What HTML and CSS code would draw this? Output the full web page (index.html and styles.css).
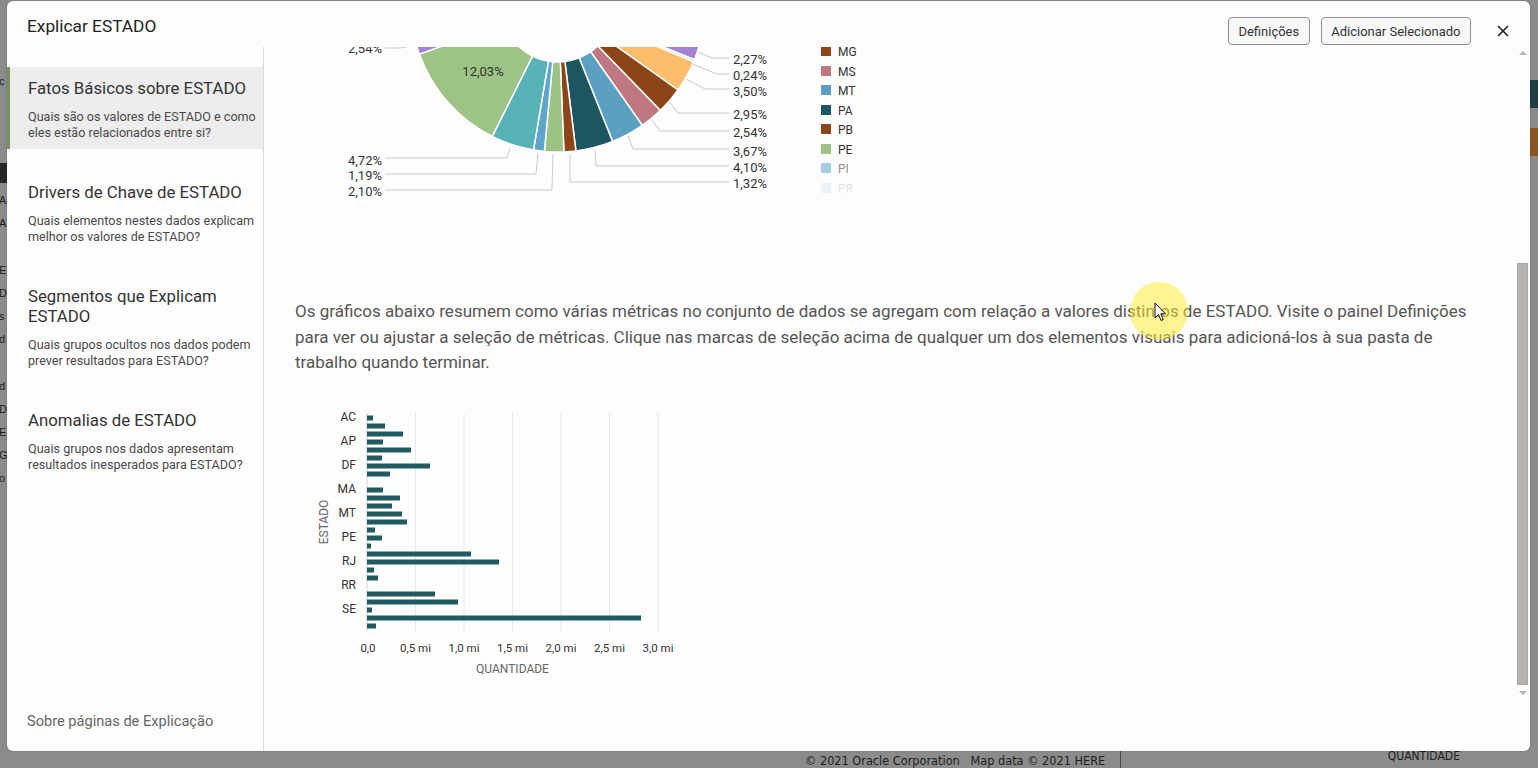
FILE: index.html
```html
<!DOCTYPE html>
<html lang="pt-BR">
<head>
<meta charset="utf-8">
<title>Explicar ESTADO</title>
<link rel="stylesheet" href="styles.css">
</head>
<body>
<div class="backdrop">
  <div class="bd-main">
    <div class="bd-left">
      <span class="bl-c">c</span>
      <span class="bl-block"></span>
      <span>A</span><span>A</span><span class="gap">E</span><span>D</span><span>s</span><span>d</span><span class="gap">d</span><span>D</span><span>E</span><span>G</span><span>o</span>
    </div>
    <div class="bd-right">
      <span class="blk teal"></span>
      <span class="blk orange"></span>
    </div>
  </div>
  <div class="bd-bottom">
    <span class="copy">© 2021 Oracle Corporation&nbsp;&nbsp; Map data © 2021 HERE</span>
    <span class="vline"></span>
    <span class="qty">QUANTIDADE</span>
  </div>
</div>

<div class="dialog">
  <header class="dlg-head">
    <h1 class="dlg-title">Explicar ESTADO</h1>
    <div class="actions">
      <button class="btn">Definições</button>
      <button class="btn">Adicionar Selecionado</button>
      <button class="close" aria-label="Fechar">
        <svg width="12" height="12" viewBox="0 0 12 12"><path d="M1 1 L11 11 M11 1 L1 11" stroke="#222" stroke-width="1.6" fill="none"/></svg>
      </button>
    </div>
  </header>
  <div class="dlg-body">
    <nav class="side">
      <ul class="nav-list">
        <li class="nav-item active">
          <h2 class="nav-title">Fatos Básicos sobre ESTADO</h2>
          <p class="nav-desc">Quais são os valores de ESTADO e como eles estão relacionados entre si?</p>
        </li>
        <li class="nav-item">
          <h2 class="nav-title">Drivers de Chave de ESTADO</h2>
          <p class="nav-desc">Quais elementos nestes dados explicam melhor os valores de ESTADO?</p>
        </li>
        <li class="nav-item">
          <h2 class="nav-title">Segmentos que Explicam ESTADO</h2>
          <p class="nav-desc">Quais grupos ocultos nos dados podem prever resultados para ESTADO?</p>
        </li>
        <li class="nav-item">
          <h2 class="nav-title">Anomalias de ESTADO</h2>
          <p class="nav-desc">Quais grupos nos dados apresentam resultados inesperados para ESTADO?</p>
        </li>
      </ul>
      <a class="about" href="#">Sobre páginas de Explicação</a>
    </nav>
    <main class="content">
      <div class="scroll-area">
        <svg class="pie" viewBox="264 47 640 160" width="640" height="160">
          <g stroke="#fff" stroke-width="1.5">
            <path fill="#a084cf" d="M700.9,39.6 A147,147 0 0 1 694.5,59.6 L610.9,26.2 A57,57 0 0 0 613.4,18.4 Z"/>
            <path fill="#d9c7ea" d="M694.5,59.6 A147,147 0 0 1 693.6,61.7 L610.6,27.0 A57,57 0 0 0 610.9,26.2 Z"/>
            <path fill="#fdbe6b" d="M693.6,61.7 A147,147 0 0 1 678.0,90.0 L604.5,37.9 A57,57 0 0 0 610.6,27.0 Z"/>
            <path fill="#8c4517" d="M678.0,90.0 A147,147 0 0 1 660.3,110.6 L597.7,45.9 A57,57 0 0 0 604.5,37.9 Z"/>
            <path fill="#bf7882" d="M660.3,110.6 A147,147 0 0 1 642.3,125.4 L590.7,51.7 A57,57 0 0 0 597.7,45.9 Z"/>
            <path fill="#5ba0c1" d="M642.3,125.4 A147,147 0 0 1 612.6,141.5 L579.2,57.9 A57,57 0 0 0 590.7,51.7 Z"/>
            <path fill="#1d5560" d="M612.6,141.5 A147,147 0 0 1 575.9,150.9 L564.9,61.6 A57,57 0 0 0 579.2,57.9 Z"/>
            <path fill="#8c4517" d="M575.9,150.9 A147,147 0 0 1 563.9,151.9 L560.3,62.0 A57,57 0 0 0 564.9,61.6 Z"/>
            <path fill="#9cc386" d="M563.9,151.9 A147,147 0 0 1 544.4,151.4 L552.7,61.8 A57,57 0 0 0 560.3,62.0 Z"/>
            <path fill="#5ea5cb" d="M544.4,151.4 A147,147 0 0 1 533.5,149.9 L548.5,61.2 A57,57 0 0 0 552.7,61.8 Z"/>
            <path fill="#58b3b6" d="M533.5,149.9 A147,147 0 0 1 492.2,136.4 L532.5,56.0 A57,57 0 0 0 548.5,61.2 Z"/>
            <path fill="#9dc485" d="M492.2,136.4 A147,147 0 0 1 419.4,54.1 L504.3,24.0 A57,57 0 0 0 532.5,56.0 Z"/>
            <path fill="#a084cf" d="M419.4,54.1 A147,147 0 0 1 413.7,33.0 L502.0,15.9 A57,57 0 0 0 504.3,24.0 Z"/>
          </g>
          <g fill="none" stroke="#c9c9c9" stroke-width="1">
            <polyline points="698,52 712,58 729,58"/>
            <polyline points="690,63 717,74 729,74"/>
            <polyline points="686,79 705,89 729,89"/>
            <polyline points="669,101 678,113 729,113"/>
            <polyline points="652,120 660,131 729,131"/>
            <polyline points="628,136 633,149 729,149"/>
            <polyline points="595,150 596,166 729,166"/>
            <polyline points="570,154 570,182 729,182"/>
            <polyline points="510,148 507,158 385,158"/>
            <polyline points="538,153 536,174 385,174"/>
            <polyline points="553,154 552,190 385,190"/>
            <polyline points="412,46 400,48 385,48"/>
          </g>
          <g class="pie-lbl">
            <text x="733" y="63.5">2,27%</text>
            <text x="733" y="79.5">0,24%</text>
            <text x="733" y="95.5">3,50%</text>
            <text x="733" y="118.5">2,95%</text>
            <text x="733" y="136.5">2,54%</text>
            <text x="733" y="155.5">3,67%</text>
            <text x="733" y="171.5">4,10%</text>
            <text x="733" y="187.5">1,32%</text>
            <text x="382" y="53" text-anchor="end">2,54%</text>
            <text x="382" y="164.5" text-anchor="end">4,72%</text>
            <text x="382" y="179.5" text-anchor="end">1,19%</text>
            <text x="382" y="195.5" text-anchor="end">2,10%</text>
            <text x="483" y="75.5" text-anchor="middle">12,03%</text>
          </g>
          <g class="legend">
            <rect x="821" y="46" width="10" height="10" fill="#8c4517"/><text x="838" y="55.5">MG</text>
            <rect x="821" y="66" width="10" height="10" fill="#bf7882"/><text x="838" y="75.5">MS</text>
            <rect x="821" y="85" width="10" height="10" fill="#5ba0c1"/><text x="838" y="94.5">MT</text>
            <rect x="821" y="105" width="10" height="10" fill="#1d5560"/><text x="838" y="114.5">PA</text>
            <rect x="821" y="124" width="10" height="10" fill="#8c4517"/><text x="838" y="133.5">PB</text>
            <rect x="821" y="144" width="10" height="10" fill="#9cc386"/><text x="838" y="153.5">PE</text>
            <g opacity="0.55"><rect x="821" y="163" width="10" height="10" fill="#5ea5cb"/><text x="838" y="172.5">PI</text></g>
            <g opacity="0.12"><rect x="821" y="183" width="10" height="10" fill="#5ea5cb"/><text x="838" y="192.5">PR</text></g>
          </g>
        </svg>

        <p class="intro">Os gráficos abaixo resumem como várias métricas no conjunto de dados se agregam com relação a valores distintos de ESTADO. Visite o painel Definições para ver ou ajustar a seleção de métricas. Clique nas marcas de seleção acima de qualquer um dos elementos visuais para adicioná-los à sua pasta de trabalho quando terminar.</p>

        <svg class="bars" viewBox="295 400 420 290" width="420" height="290">
          <g stroke="#e6e6e6" stroke-width="1">
            <line x1="415.5" y1="413" x2="415.5" y2="631"/>
            <line x1="464" y1="413" x2="464" y2="631"/>
            <line x1="512.5" y1="413" x2="512.5" y2="631"/>
            <line x1="561" y1="413" x2="561" y2="631"/>
            <line x1="609.5" y1="413" x2="609.5" y2="631"/>
            <line x1="658" y1="413" x2="658" y2="631"/>
          </g>
          <line x1="367" y1="413" x2="367" y2="631" stroke="#d4d4d4"/>
          <g fill="#225a61">
            <rect x="367" y="415.5" width="6" height="5"/>
            <rect x="367" y="423.5" width="18" height="5"/>
            <rect x="367" y="431.5" width="36" height="5"/>
            <rect x="367" y="439.5" width="16" height="5"/>
            <rect x="367" y="447.5" width="44" height="5"/>
            <rect x="367" y="455.5" width="15" height="5"/>
            <rect x="367" y="463.5" width="63" height="5"/>
            <rect x="367" y="471.5" width="23" height="5"/>
            <rect x="367" y="487.5" width="16" height="5"/>
            <rect x="367" y="495.5" width="33" height="5"/>
            <rect x="367" y="503.5" width="25" height="5"/>
            <rect x="367" y="511.5" width="35" height="5"/>
            <rect x="367" y="519.5" width="40" height="5"/>
            <rect x="367" y="527.5" width="8" height="5"/>
            <rect x="367" y="535.5" width="15" height="5"/>
            <rect x="367" y="543.5" width="4" height="5"/>
            <rect x="367" y="551.5" width="104" height="5"/>
            <rect x="367" y="559.5" width="132" height="5"/>
            <rect x="367" y="567.5" width="7" height="5"/>
            <rect x="367" y="575.5" width="11" height="5"/>
            <rect x="367" y="591.5" width="68" height="5"/>
            <rect x="367" y="599.5" width="91" height="5"/>
            <rect x="367" y="607.5" width="5" height="5"/>
            <rect x="367" y="615.5" width="274" height="5"/>
            <rect x="367" y="623.5" width="9" height="5"/>
          </g>
          <g class="ylbl" text-anchor="end">
            <text x="356" y="421">AC</text>
            <text x="356" y="445">AP</text>
            <text x="356" y="469">DF</text>
            <text x="356" y="493">MA</text>
            <text x="356" y="517">MT</text>
            <text x="356" y="541">PE</text>
            <text x="356" y="565">RJ</text>
            <text x="356" y="589">RR</text>
            <text x="356" y="613">SE</text>
          </g>
          <g class="xlbl" text-anchor="middle">
            <text x="368" y="652">0,0</text>
            <text x="415.5" y="652">0,5 mi</text>
            <text x="464" y="652">1,0 mi</text>
            <text x="512.5" y="652">1,5 mi</text>
            <text x="561" y="652">2,0 mi</text>
            <text x="609.5" y="652">2,5 mi</text>
            <text x="658" y="652">3,0 mi</text>
          </g>
          <text class="axis-title" x="512.5" y="673" text-anchor="middle">QUANTIDADE</text>
          <text class="axis-title" x="0" y="0" text-anchor="middle" transform="translate(328 522) rotate(-90)">ESTADO</text>
        </svg>
      </div>
      <div class="scrollbar">
        <span class="sb-arrow up"></span>
        <div class="sb-track"><div class="sb-thumb"></div></div>
        <span class="sb-arrow down"></span>
      </div>
    </main>
  </div>
</div>

<div class="hl"></div>
<svg class="cursor" width="14" height="21" viewBox="0 0 14 21"><path d="M1 1 L1 16 L4.5 12.6 L7 18.5 L9.3 17.5 L6.8 11.8 L11.5 11.8 Z" fill="#fff" stroke="#111" stroke-width="1" stroke-linejoin="round"/></svg>
</body>
</html>
```

FILE: styles.css
```css
* { box-sizing: border-box; }

html, body {
  margin: 0;
  padding: 0;
}

body {
  width: 1538px;
  height: 768px;
  overflow: hidden;
  position: relative;
  background: #8b8b8b;
  font-family: Roboto, "Liberation Sans", sans-serif;
}

/* ---------- backdrop (page behind the modal) ---------- */
.backdrop {
  height: 100%;
  display: flex;
  flex-direction: column;
}

.bd-main {
  flex: 1;
  display: flex;
  justify-content: space-between;
}

.bd-left {
  width: 7px;
  overflow: hidden;
  display: flex;
  flex-direction: column;
  padding-top: 70px;
  font: 11px/23px "Liberation Sans", sans-serif;
  color: #1b1b1b;
  text-indent: -1px;
}

.bd-left .bl-block {
  height: 20px;
  margin: 70px 0 6px;
  background: #262626;
}

.bd-left .gap { margin-top: 24px; }

.bd-right {
  width: 8px;
  display: flex;
  flex-direction: column;
  gap: 20px;
  padding-top: 80px;
}

.blk { height: 28px; }
.blk.teal { background: #1f3e44; }
.blk.orange { background: #8a5521; }

.bd-bottom {
  height: 17px;
  display: flex;
  align-items: flex-start;
  font: 12px/16px "Liberation Sans Narrow", "DejaVu Sans Condensed", sans-serif;
  color: #1e1e1e;
}

.copy {
  margin-left: 805px;
  padding-top: 2px;
  font-size: 12.6px;
}

.vline {
  width: 1px;
  height: 17px;
  margin-left: 15px;
  background: #4a4a4a;
}

.qty {
  margin-left: auto;
  margin-right: 78px;
  margin-top: -3px;
  font-size: 12px;
}

/* ---------- dialog ---------- */
.dialog {
  position: absolute;
  left: 7px;
  top: 1px;
  width: 1523px;
  height: 750px;
  background: #fdfdfd;
  border-radius: 6px;
  display: flex;
  flex-direction: column;
  overflow: hidden;
  box-shadow: 0 0 2px rgba(0, 0, 0, 0.25);
}

.dlg-head {
  height: 46px;
  flex: none;
  display: flex;
  align-items: flex-start;
  padding: 12px 15px 0 20px;
}

.dlg-title {
  flex: 1;
  margin: 0;
  font-size: 17.3px;
  font-weight: 400;
  line-height: 27px;
  color: #222;
}

.actions {
  display: flex;
  align-items: center;
  gap: 11px;
  margin-top: 4px;
}

.btn {
  height: 28px;
  padding: 0 9.5px;
  border: 1px solid #8e8e8e;
  border-radius: 4px;
  background: #f8f8f8;
  font: 13px Roboto, "Liberation Sans", sans-serif;
  color: #333;
}

.close {
  width: 24px;
  height: 28px;
  margin-left: 9px;
  padding: 0;
  border: 0;
  background: none;
  display: flex;
  align-items: center;
  justify-content: center;
}

.dlg-body {
  flex: 1;
  min-height: 0;
  display: flex;
}

/* ---------- sidebar ---------- */
.side {
  width: 257px;
  flex: none;
  border-right: 1px solid #d9d9d9;
  display: flex;
  flex-direction: column;
  padding-top: 20px;
}

.nav-list {
  list-style: none;
  margin: 0;
  padding: 0;
  display: flex;
  flex-direction: column;
  gap: 22px;
}

.nav-item {
  padding: 11px 2px 8px 18px;
  border-left: 3px solid transparent;
}

.nav-item.active {
  background: #ededed;
  border-left-color: #75905f;
}

.nav-title {
  margin: 0;
  font-size: 16.8px;
  font-weight: 400;
  line-height: 20px;
  color: #333;
}

.nav-desc {
  margin: 11px 0 0;
  font-size: 12.6px;
  line-height: 16px;
  color: #4a4a4a;
}

.about {
  margin-top: auto;
  padding: 0 0 20px 20px;
  font-size: 14.6px;
  line-height: 20px;
  color: #666;
  text-decoration: none;
}

/* ---------- content ---------- */
.content {
  flex: 1;
  min-width: 0;
  display: flex;
}

.scroll-area {
  flex: 1;
  min-width: 0;
  overflow: hidden;
}

.pie {
  display: block;
}

.pie-lbl text {
  font: 13px Roboto, "Liberation Sans", sans-serif;
  fill: #333;
}

.legend text {
  font: 12px Roboto, "Liberation Sans", sans-serif;
  fill: #333;
}

.intro {
  margin: 92px 40px 0 31px;
  font-size: 17px;
  line-height: 25.5px;
  color: #555;
}

.bars {
  display: block;
  margin: 24px 0 0 31px;
}

.ylbl text {
  font: 12px Roboto, "Liberation Sans", sans-serif;
  fill: #333;
}

.xlbl text {
  font: 11.5px Roboto, "Liberation Sans", sans-serif;
  fill: #333;
}

.axis-title {
  font: 12px Roboto, "Liberation Sans", sans-serif;
  fill: #666;
}

/* ---------- scrollbar ---------- */
.scrollbar {
  width: 15px;
  flex: none;
  display: flex;
  flex-direction: column;
  padding-bottom: 52px;
}

.sb-arrow {
  height: 12px;
  display: flex;
  align-items: center;
  justify-content: center;
}

.sb-arrow::before {
  content: "";
  border-left: 4px solid transparent;
  border-right: 4px solid transparent;
  border-bottom: 4px solid #b5b5b5;
}

.sb-arrow.down::before {
  border-bottom: 0;
  border-top: 4px solid #b5b5b5;
}

.sb-track {
  flex: 1;
  display: flex;
  justify-content: center;
  padding-top: 204px;
}

.sb-thumb {
  width: 11px;
  height: 422px;
  background: #b6b3b1;
  border: 1px solid #a9a6a4;
}

/* ---------- pointer highlight overlay ---------- */
.hl {
  position: absolute;
  left: 1130px;
  top: 282px;
  width: 58px;
  height: 58px;
  border-radius: 50%;
  background: rgba(255, 236, 40, 0.5);
}

.cursor {
  position: absolute;
  left: 1154px;
  top: 302px;
}
```
